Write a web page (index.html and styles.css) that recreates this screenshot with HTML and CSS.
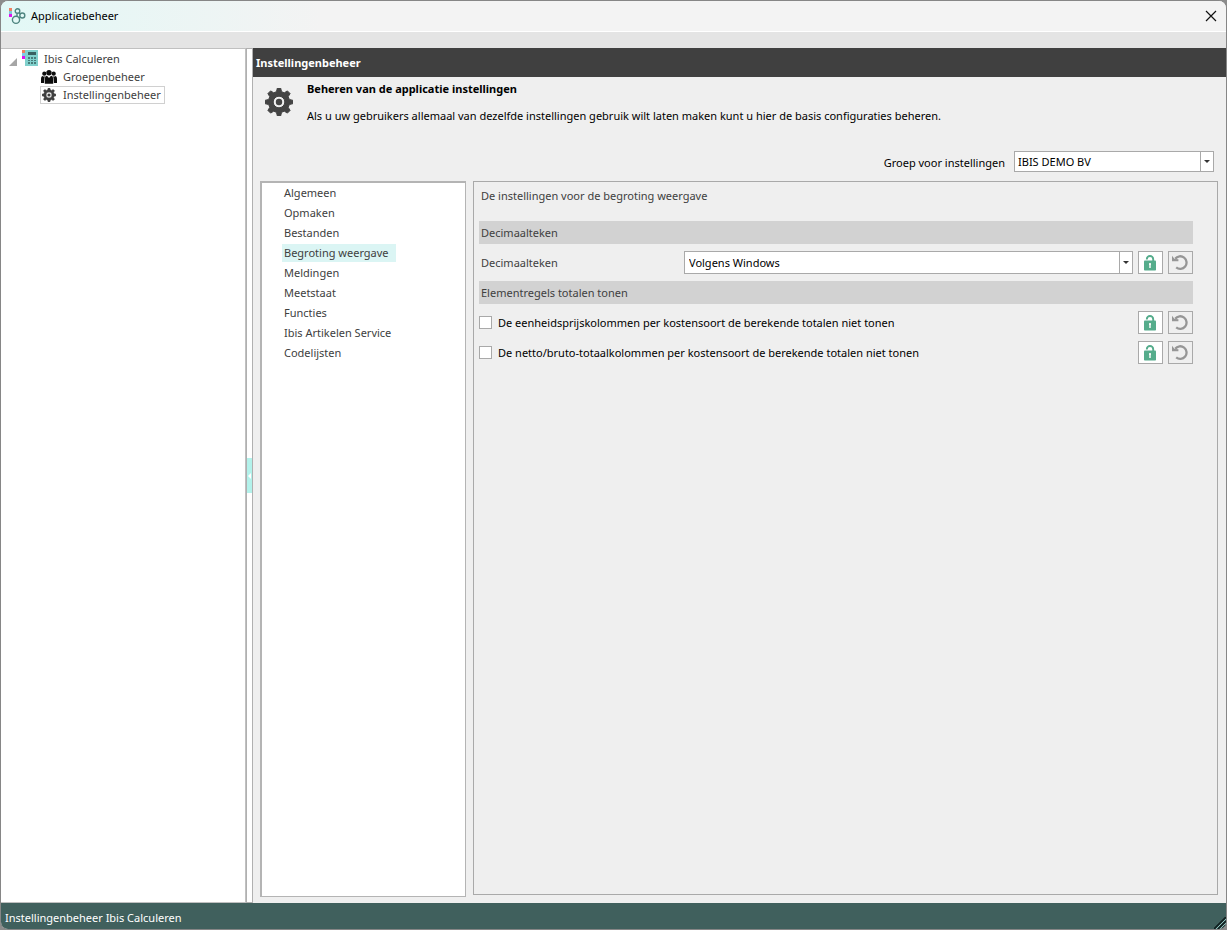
FILE: index.html
```html
<!DOCTYPE html>
<html lang="nl">
<head>
<meta charset="utf-8">
<title>Applicatiebeheer</title>
<link rel="stylesheet" href="styles.css">
</head>
<body>
<svg class="defs" aria-hidden="true">
  <symbol id="gear" viewBox="0 0 28 28">
    <path fill-rule="evenodd" d="M12.400 0h3.200l1 3.700 2.700 1.100 3.100-1.900 2.700 2.700-1.900 3.100 1.100 2.700 3.700 1v3.200l-3.700 1-1.100 2.700 1.900 3.100-2.700 2.700-3.100-1.900-2.700 1.100-1 3.700h-3.200l-1-3.700-2.700-1.100-3.100 1.900-2.700-2.700 1.900-3.100-1.100-2.700-3.700-1v-3.200l3.700-1 1.100-2.700-1.900-3.100 2.700-2.700 3.100 1.900 2.700-1.100zM14 8.200a5.800 5.800 0 1 0 0 11.600a5.800 5.800 0 1 0 0-11.600z" stroke-width="1" stroke="#444" stroke-linejoin="round"/>
    <circle cx="14" cy="14" r="3.200"/>
  </symbol>
  <symbol id="lock" viewBox="0 0 13 16">
    <path d="M2.800 4.500V4.200a3.200 3.200 0 0 1 6.400 0V7" fill="none" stroke="#54ac8b" stroke-width="1.900"/>
    <rect x="0" y="5.500" width="12" height="10" rx=".8" fill="#54ac8b"/>
    <path d="M6 8.500v4.500" stroke="#fff" stroke-width="1.400"/>
    <path d="M5 8.300h2v1.500H5z" fill="#fff"/>
  </symbol>
  <symbol id="undo" viewBox="0 0 18 16">
    <path d="M3.200 3.800A6.300 6.300 0 1 1 4.200 12.400" fill="none" stroke="#969696" stroke-width="2.300"/>
    <path d="M0 .7V6.300H6.400V4.300L2.600 4z" fill="#969696"/>
  </symbol>
</svg>
<div class="window">
  <header class="titlebar">
    <svg class="app-icon" width="17" height="17" viewBox="0 0 17 17" aria-hidden="true">
      <path d="M0 0h3v3H0z" fill="#f08060"/><path d="M0 3h3v3H0z" fill="#80c8d8"/><path d="M0 6h3v3H0z" fill="#e010f0"/>
      <g fill="none" stroke="#4f8580" stroke-width="1.400">
        <circle cx="8.500" cy="3" r="2.300"/><circle cx="13.300" cy="7.500" r="2.500"/><circle cx="7" cy="11.800" r="3.600"/>
        <path d="M8 5.300v3M10 4.800l1.500 1.200M10 10l1.500-1"/>
      </g>
    </svg>
    <h1>Applicatiebeheer</h1>
    <button class="close" type="button" aria-label="Sluiten">
      <svg width="12" height="12" viewBox="0 0 12 12"><path d="M1 1l10 10M11 1L1 11" stroke="#111" stroke-width="1.200"/></svg>
    </button>
  </header>
  <div class="toolstrip"></div>
  <div class="workspace">
    <nav class="tree">
      <ul>
        <li><a href="#calculeren">
          <svg class="expander" width="8" height="8" viewBox="0 0 8 8"><path d="M8 0v8H0z" fill="#a6a6a6"/></svg>
          <svg width="17" height="18" viewBox="0 0 17 18">
            <path d="M0 0h3v3H0z" fill="#f08060"/><path d="M0 3h3v3H0z" fill="#80c8e8"/><path d="M0 6h3v3H0z" fill="#e010f0"/>
            <path d="M3 0h13v16H3z" fill="#80d0cc"/><path d="M6 2h8v3H6z" fill="#386060"/>
            <path d="M6 7h2v2H6zm3 0h2v2H9zm3 0h2v2h-2zM6 10h2v1H6zm3 0h2v1H9zm3 0h2v1h-2zM6 12h2v2H6zm3 0h2v2H9zm3 0h2v2h-2z" fill="#487c7a"/>
          </svg>
          <span>Ibis Calculeren</span></a>
          <ul>
            <li><a href="#groepen">
              <svg width="16" height="14" viewBox="0 0 16 14" fill="#0c0c0c">
                <circle cx="8" cy="2.800" r="2.700"/><circle cx="3.300" cy="3.700" r="2.100"/><circle cx="12.700" cy="3.700" r="2.100"/>
                <path d="M3.800 13.800V9.500Q3.800 6 6 5.800L8 8l2-2.200Q12.200 6 12.200 9.500v4.300zM0 13V9q0-3 2-3l1 1q.8-1 1.300-.9Q3.100 7.500 3.100 13zM16 13V9q0-3-2-3l-1 1q-.8-1-1.300-.9 1.200 1.400 1.200 6.900z"/>
              </svg>
              <span>Groepenbeheer</span></a></li>
            <li><a href="#instellingen" class="current" aria-current="page">
              <svg width="14" height="14" fill="#3f3f3f"><use href="#gear"/></svg>
              <span>Instellingenbeheer</span></a></li>
          </ul>
        </li>
      </ul>
    </nav>
    <div class="splitter">
      <button type="button" aria-label="Paneel inklappen"><svg width="3" height="6" viewBox="0 0 3 6"><path d="M3 0v6L0 3z" fill="#fff"/></svg></button>
    </div>
    <main class="content">
      <h2>Instellingenbeheer</h2>
      <div class="body">
        <div class="intro">
          <svg width="28" height="28" fill="#444"><use href="#gear"/></svg>
          <div>
            <h3>Beheren van de applicatie instellingen</h3>
            <p>Als u uw gebruikers allemaal van dezelfde instellingen gebruik wilt laten maken kunt u hier de basis configuraties beheren.</p>
          </div>
        </div>
        <div class="group">
          <label for="group">Groep voor instellingen</label>
          <span class="dropdown"><select id="group"><option>IBIS DEMO BV</option></select></span>
        </div>
        <div class="panels">
          <nav class="sections">
            <a href="#algemeen">Algemeen</a>
            <a href="#opmaken">Opmaken</a>
            <a href="#bestanden">Bestanden</a>
            <a href="#begroting" class="active">Begroting weergave</a>
            <a href="#meldingen">Meldingen</a>
            <a href="#meetstaat">Meetstaat</a>
            <a href="#functies">Functies</a>
            <a href="#artikelen">Ibis Artikelen Service</a>
            <a href="#codelijsten">Codelijsten</a>
          </nav>
          <form class="settings">
            <p>De instellingen voor de begroting weergave</p>
            <h4>Decimaalteken</h4>
            <div class="row">
              <label class="name" for="decimal">Decimaalteken</label>
              <span class="dropdown"><select id="decimal"><option>Volgens Windows</option></select></span>
              <button class="lock" type="button" aria-label="Vergrendelen"><svg width="13" height="16"><use href="#lock"/></svg></button>
              <button type="button" aria-label="Herstellen"><svg width="18" height="16"><use href="#undo"/></svg></button>
            </div>
            <h4>Elementregels totalen tonen</h4>
            <div class="row">
              <label class="check"><input type="checkbox">De eenheidsprijskolommen per kostensoort de berekende totalen niet tonen</label>
              <button class="lock" type="button" aria-label="Vergrendelen"><svg width="13" height="16"><use href="#lock"/></svg></button>
              <button type="button" aria-label="Herstellen"><svg width="18" height="16"><use href="#undo"/></svg></button>
            </div>
            <div class="row">
              <label class="check"><input type="checkbox">De netto/bruto-totaalkolommen per kostensoort de berekende totalen niet tonen</label>
              <button class="lock" type="button" aria-label="Vergrendelen"><svg width="13" height="16"><use href="#lock"/></svg></button>
              <button type="button" aria-label="Herstellen"><svg width="18" height="16"><use href="#undo"/></svg></button>
            </div>
          </form>
        </div>
      </div>
    </main>
  </div>
  <footer class="statusbar">
    <span>Instellingenbeheer Ibis Calculeren</span>
    <svg class="grip" width="12" height="12" viewBox="0 0 12 12"><path d="M0 12L12 0M4 12l8-8M8 12l4-4" stroke="#102020" stroke-width="1.600"/><path d="M2 12L12 2M6 12l6-6" stroke="#8fc0bc"/></svg>
  </footer>
</div>
</body>
</html>
```
FILE: styles.css
```css
* { box-sizing: border-box; }

body {
  margin: 0;
  background: #8c8c8c;
  color: #000;
  font: 11px/16px "Noto Sans", "Open Sans", sans-serif;
}

h1, h2, h3, h4, p, ul { margin: 0; padding: 0; font-size: 11px; font-weight: 400; }
ul { list-style: none; }
a { color: #404040; text-decoration: none; }
button, select, input { margin: 0; font: inherit; color: inherit; }
svg { display: block; flex: none; }
.defs { position: absolute; width: 0; height: 0; }

.window {
  display: flex;
  flex-direction: column;
  min-height: 100vh;
  border: 1px solid #868686;
  border-radius: 8px;
  background: #efefef;
  overflow: hidden;
}

.titlebar {
  display: flex;
  align-items: center;
  height: 31px;
  padding: 0 9px 0 8px;
  gap: 5px;
  border-bottom: 1px solid #fff;
  background: linear-gradient(90deg, #e2f8f6, #f3f3f3 320px);
}
.close {
  display: flex;
  margin-left: auto;
  padding: 0;
  border: 0;
  background: none;
}
.toolstrip { height: 16px; background: #e4e4e4; }

.workspace { display: flex; flex: 1; }

.tree {
  width: 245px;
  padding-top: 1px;
  border: solid #c0c0c0;
  border-width: 1px 1px 1px 0;
  background: #fff;
}
.tree a {
  display: flex;
  align-items: center;
  width: max-content;
  height: 18px;
  padding-left: 8px;
  gap: 5px;
}
.tree .expander { margin: 5px 0 0; }
.tree ul ul { padding-left: 39px; }
.tree ul ul a { padding: 0 3px 0 1px; gap: 6px; }
.tree ul ul .current { padding-left: 1px; gap: 7px; border: 1px solid #d0d0d0; }

.splitter {
  display: flex;
  align-items: center;
  width: 7px;
  border: 1px solid #b0b0b0;
  background: #fff;
}
.splitter button {
  display: flex;
  align-items: center;
  justify-content: center;
  width: 5px;
  height: 35px;
  padding: 0;
  border: 0;
  background: #b3f2eb;
}

.content { display: flex; flex: 1; flex-direction: column; min-width: 0; }
.content h2 {
  height: 29px;
  padding: 0 3px;
  background: #404040;
  color: #fff;
  font-weight: 700;
  line-height: 29px;
}
.body { display: flex; flex: 1; flex-direction: column; padding: 4px 8px 8px 7px; }
.intro { display: flex; padding-left: 5px; gap: 14px; }
.intro svg { margin-top: 7px; }
.intro h3 { margin-bottom: 11px; font-weight: 700; }

.group {
  display: flex;
  align-items: center;
  justify-content: flex-end;
  margin: 27px 4px 9px;
  gap: 9px;
}
.group label { padding-top: 2px; }
.dropdown { position: relative; display: flex; height: 21px; }
.dropdown select {
  width: 100%;
  padding: 0 20px 0 3px;
  border: 1px solid #a9a9a9;
  border-radius: 0;
  appearance: none;
  background: #fff;
}
.dropdown::before {
  content: "";
  position: absolute;
  top: 0;
  right: 13px;
  bottom: 0;
  border-left: 1px solid #a9a9a9;
}
.dropdown::after {
  content: "";
  position: absolute;
  top: 9px;
  right: 4px;
  border: 3px solid transparent;
  border-top-color: #333;
  border-bottom: 0;
}
.group .dropdown { width: 200px; }

.panels { display: flex; flex: 1; gap: 7px; }
.sections {
  display: flex;
  flex-direction: column;
  align-items: flex-start;
  width: 206px;
  margin-bottom: -2px;
  padding: 1px 20px;
  gap: 2px;
  border: 2px solid #b4b4b4;
  border-width: 2px 1px 1px 2px;
  background: #fff;
}
.sections a { height: 18px; padding: 0 7px 0 2px; line-height: 18px; }
.sections .active { background: #dbf5f4; }

.settings {
  flex: 1;
  padding: 6px 24px 6px 5px;
  border: 1px solid #a9a9a9;
  color: #404040;
}
.settings p { padding: 0 2px; margin-bottom: 17px; }
.settings h4 { height: 23px; padding: 0 2px; background: #d2d2d2; line-height: 23px; }
.row { display: flex; align-items: center; height: 23px; margin: 7px 0; gap: 5px; }
.row .name { width: 200px; padding-left: 2px; }
.row .dropdown { flex: 1; height: 23px; }
.row .dropdown select { padding-left: 4px; }
.row .dropdown::after { top: 10px; }
.check { display: flex; flex: 1; align-items: center; gap: 6px; color: #000; }
.check input {
  width: 13px;
  height: 13px;
  border: 1px solid #a9a9a9;
  appearance: none;
  background: #fff;
}
.dropdown select, .intro, .group { color: #000; }
.row button {
  display: flex;
  align-items: center;
  justify-content: center;
  width: 25px;
  height: 23px;
  padding: 0;
  border: 1px solid #a9a9a9;
  background: #efefef;
}
.row .lock { background: #fff; }

.statusbar {
  display: flex;
  align-items: center;
  justify-content: space-between;
  height: 26px;
  padding: 4px 0 0 4px;
  background: #40605d;
  color: #fff;
}
.grip { align-self: flex-end; }
```
